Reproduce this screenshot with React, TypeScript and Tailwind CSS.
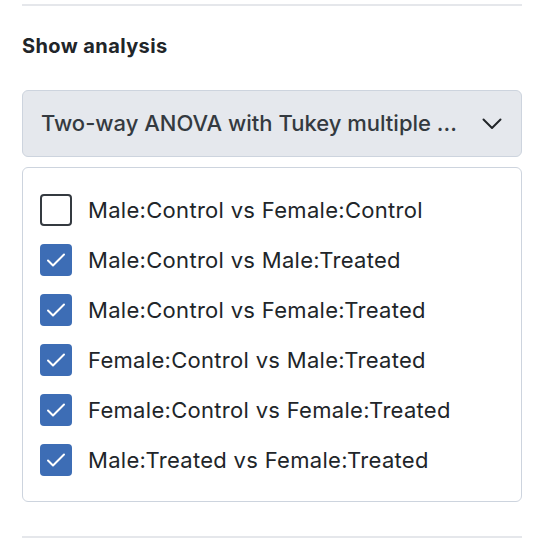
import { useState } from 'react';

const comparisons = [
  { label: 'Male:Control vs Female:Control', checked: false },
  { label: 'Male:Control vs Male:Treated', checked: true },
  { label: 'Male:Control vs Female:Treated', checked: true },
  { label: 'Female:Control vs Male:Treated', checked: true },
  { label: 'Female:Control vs Female:Treated', checked: true },
  { label: 'Male:Treated vs Female:Treated', checked: true },
];

function CheckBox({ checked }: { checked: boolean }) {
  if (!checked) {
    return <span className="block h-[32px] w-[32px] shrink-0 rounded-[4px] border-2 border-[#343a40] bg-white" />;
  }
  return (
    <span className="flex h-[32px] w-[32px] shrink-0 items-center justify-center rounded-[4px] bg-[#3d6db5]">
      <svg width="22" height="22" viewBox="0 0 22 22" fill="none">
        <path d="M3 11.5l5 5L19 5.5" stroke="white" strokeWidth="2" strokeLinecap="round" strokeLinejoin="round" />
      </svg>
    </span>
  );
}

export default function App() {
  const [items, setItems] = useState(comparisons);

  return (
    <div className="h-[542px] w-[542px] bg-white pl-[22px] pr-[20px] pt-[4px] font-['Inter',sans-serif]">
      <div className="h-[2px] bg-[#e5e7eb]" />

      <h2 className="mt-[28px] text-[20px] font-bold leading-[24px] tracking-[0.4px] text-[#212529]">Show analysis</h2>

      <button className="mt-[32px] flex h-[67px] w-full items-center justify-between rounded-[6px] border border-[#cdd4de] bg-[#e5e8ed] pl-[18px] pr-[19px] text-left">
        <span className="truncate text-[22px] font-medium text-[#343a40]">Two-way ANOVA with Tukey multiple ...</span>
        <svg width="20" height="12" viewBox="0 0 20 12" fill="none" className="ml-4 shrink-0">
          <path d="M1.5 1.5L10 10l8.5-8.5" stroke="#212529" strokeWidth="2" strokeLinecap="round" strokeLinejoin="round" />
        </svg>
      </button>

      <div className="mt-[10px] flex flex-col gap-[18px] rounded-[6px] border border-[#cdd4de] px-[17px] pb-[25px] pt-[26px]">
        {items.map((it, i) => (
          <label
            key={it.label}
            className="flex cursor-pointer items-center gap-[16px]"
            onClick={() => setItems(items.map((x, j) => (j === i ? { ...x, checked: !x.checked } : x)))}
          >
            <CheckBox checked={it.checked} />
            <span className="text-[22px] leading-[32px] tracking-[0.3px] text-[#212529]">{it.label}</span>
          </label>
        ))}
      </div>

      <div className="mt-[34px] h-[2px] bg-[#e5e7eb]" />
    </div>
  );
}
